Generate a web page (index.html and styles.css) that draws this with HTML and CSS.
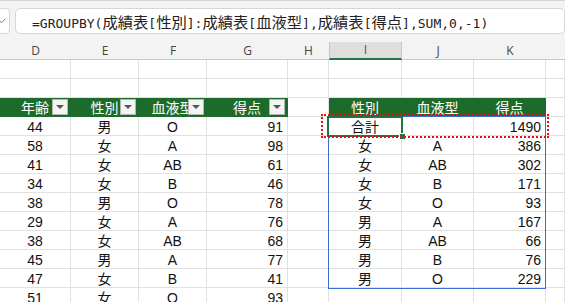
FILE: index.html
```html
<!DOCTYPE html>
<html lang="ja">
<head>
<meta charset="utf-8">
<link rel="stylesheet" href="styles.css">
</head>
<body>
<div class="app">
  <div class="fbar">
    <div class="namebox">
      <svg class="chev" width="9" height="6" viewBox="0 0 9 6"><path d="M0.5 0.8 L4.5 4.8 L8.5 0.8" fill="none" stroke="#777" stroke-width="1"/></svg>
    </div>
    <div class="fx"><span class="ftext">=GROUPBY(<span class="j">成績表</span>[<span class="j">性別</span>]:<span class="j">成績表</span>[<span class="j">血液型</span>],<span class="j">成績表</span>[<span class="j">得点</span>],SUM,0<span class="err">,-1</span>)</span></div>
  </div>
  <div class="colhead">
    <div class="ch">D</div>
    <div class="ch">E</div>
    <div class="ch">F</div>
    <div class="ch">G</div>
    <div class="ch">H</div>
    <div class="ch sel">I</div>
    <div class="ch">J</div>
    <div class="ch">K</div>
    <div class="ch last"></div>
  </div>
  <div class="sheet">
    <!-- row 1 -->
    <div class="cell"></div><div class="cell"></div><div class="cell"></div><div class="cell"></div><div class="cell"></div><div class="cell"></div><div class="cell"></div><div class="cell"></div><div class="cell"></div>
    <!-- row 2 -->
    <div class="cell"></div><div class="cell"></div><div class="cell"></div><div class="cell"></div><div class="cell"></div><div class="cell"></div><div class="cell"></div><div class="cell"></div><div class="cell"></div>
    <!-- row 3 headers -->
    <div class="cell hd">年齢<span class="dd"></span></div>
    <div class="cell hd">性別<span class="dd"></span></div>
    <div class="cell hd">血液型<span class="dd"></span></div>
    <div class="cell hd">得点<span class="dd"></span></div>
    <div class="cell"></div>
    <div class="cell hd">性別</div>
    <div class="cell hd">血液型</div>
    <div class="cell hd">得点</div>
    <div class="cell"></div>
    <!-- row 4 -->
    <div class="cell c">44</div><div class="cell c">男</div><div class="cell c">O</div><div class="cell r">91</div><div class="cell"></div>
    <div class="cell c">合計</div><div class="cell c"></div><div class="cell r">1490</div><div class="cell"></div>
    <!-- row 5 -->
    <div class="cell c">58</div><div class="cell c">女</div><div class="cell c">A</div><div class="cell r">98</div><div class="cell"></div>
    <div class="cell c">女</div><div class="cell c">A</div><div class="cell r">386</div><div class="cell"></div>
    <!-- row 6 -->
    <div class="cell c">41</div><div class="cell c">女</div><div class="cell c">AB</div><div class="cell r">61</div><div class="cell"></div>
    <div class="cell c">女</div><div class="cell c">AB</div><div class="cell r">302</div><div class="cell"></div>
    <!-- row 7 -->
    <div class="cell c">34</div><div class="cell c">女</div><div class="cell c">B</div><div class="cell r">46</div><div class="cell"></div>
    <div class="cell c">女</div><div class="cell c">B</div><div class="cell r">171</div><div class="cell"></div>
    <!-- row 8 -->
    <div class="cell c">38</div><div class="cell c">男</div><div class="cell c">O</div><div class="cell r">78</div><div class="cell"></div>
    <div class="cell c">女</div><div class="cell c">O</div><div class="cell r">93</div><div class="cell"></div>
    <!-- row 9 -->
    <div class="cell c">29</div><div class="cell c">女</div><div class="cell c">A</div><div class="cell r">76</div><div class="cell"></div>
    <div class="cell c">男</div><div class="cell c">A</div><div class="cell r">167</div><div class="cell"></div>
    <!-- row 10 -->
    <div class="cell c">38</div><div class="cell c">女</div><div class="cell c">AB</div><div class="cell r">68</div><div class="cell"></div>
    <div class="cell c">男</div><div class="cell c">AB</div><div class="cell r">66</div><div class="cell"></div>
    <!-- row 11 -->
    <div class="cell c">45</div><div class="cell c">男</div><div class="cell c">A</div><div class="cell r">77</div><div class="cell"></div>
    <div class="cell c">男</div><div class="cell c">B</div><div class="cell r">76</div><div class="cell"></div>
    <!-- row 12 -->
    <div class="cell c">47</div><div class="cell c">女</div><div class="cell c">B</div><div class="cell r">41</div><div class="cell"></div>
    <div class="cell c">男</div><div class="cell c">O</div><div class="cell r">229</div><div class="cell"></div>
    <!-- row 13 -->
    <div class="cell c">51</div><div class="cell c">女</div><div class="cell c">O</div><div class="cell r">93</div><div class="cell"></div>
    <div class="cell"></div><div class="cell"></div><div class="cell"></div><div class="cell"></div>

    <div class="spill"></div>
    <div class="active"><span class="handle"></span></div>
    <div class="mark"></div>
  </div>
</div>
</body>
</html>
```
FILE: styles.css
```css
html, body {
  margin: 0;
  padding: 0;
}
body {
  width: 565px;
  height: 302px;
  overflow: hidden;
  background: #ffffff;
  font-family: "Liberation Sans", "Noto Sans CJK JP", sans-serif;
}
.app {
  width: 565px;
  height: 302px;
  overflow: hidden;
}
.fbar {
  height: 42px;
  box-sizing: border-box;
  background: #f3f3f3;
  border-top: 1px solid #d4d4d4;
  padding-top: 7px;
  display: flex;
  gap: 5px;
  margin-left: -6px;
}
.namebox {
  width: 16px;
  height: 26px;
  box-sizing: border-box;
  background: #ffffff;
  border: 1px solid #d6d6d6;
  border-radius: 4px;
  display: flex;
  align-items: center;
  justify-content: flex-end;
  padding-right: 3px;
}
.chev {
  display: block;
}
.fx {
  flex: 1;
  height: 26px;
  box-sizing: border-box;
  background: #ffffff;
  border: 1px solid #d6d6d6;
  border-radius: 5px;
  padding-left: 16px;
  white-space: nowrap;
  overflow: hidden;
}
.ftext {
  font-family: "DejaVu Sans Mono", "Noto Sans CJK JP", monospace;
  font-size: 13px;
  line-height: 24px;
  color: #222222;
}
.ftext .j {
  font-family: "Noto Sans CJK JP", sans-serif;
  font-size: 15.3px;
}
.err {
  text-decoration: underline;
  text-decoration-color: #e02020;
  text-decoration-thickness: 2px;
  text-underline-offset: 5px;
}
.colhead {
  height: 18px;
  display: grid;
  grid-template-columns: 71px 68px 68px 81px 41px 73px 72px 72px 1fr;
  background: #f3f3f3;
}
.ch {
  box-sizing: border-box;
  border-bottom: 1px solid #c8c8c8;
  font-family: "Open Sans", "Liberation Sans", sans-serif;
  font-size: 12px;
  line-height: 17px;
  text-align: center;
  color: #444444;
}
.ch.sel {
  background: #dedede;
  color: #1f6b36;
  border-left: 1px solid #c4c4c4;
  border-right: 1px solid #c4c4c4;
  border-bottom: 2px solid #217346;
  line-height: 16px;
}
.sheet {
  position: relative;
  display: grid;
  grid-template-columns: 71px 68px 68px 81px 41px 73px 72px 72px 1fr;
  grid-auto-rows: 19px;
}
.cell {
  position: relative;
  box-sizing: border-box;
  border-right: 1px solid #e1e1e1;
  border-bottom: 1px solid #e1e1e1;
  font-size: 14px;
  line-height: 16px;
  padding-top: 2px;
  color: #111111;
  white-space: nowrap;
  overflow: hidden;
}
.c {
  text-align: center;
}
.r {
  text-align: right;
  padding-right: 4px;
}
.hd {
  background: #1d6b2b;
  border-color: #1d6b2b;
  color: #ffffff;
  text-align: center;
}
.dd {
  position: absolute;
  right: 2px;
  top: 1px;
  width: 16px;
  height: 16px;
  box-sizing: border-box;
  background: #f4f4f4;
  border: 1px solid #b4b4b4;
}
.dd::after {
  content: "";
  position: absolute;
  left: 3px;
  top: 5px;
  border-left: 4px solid transparent;
  border-right: 4px solid transparent;
  border-top: 4px solid #555555;
}
.spill {
  position: absolute;
  left: 328px;
  top: 56px;
  width: 218px;
  height: 173px;
  box-sizing: border-box;
  border: 1px solid #3a6fd2;
  pointer-events: none;
}
.active {
  position: absolute;
  left: 327px;
  top: 56px;
  width: 76px;
  height: 21px;
  box-sizing: border-box;
  border: 2px solid #217346;
}
.handle {
  position: absolute;
  right: -5px;
  bottom: -5px;
  width: 7px;
  height: 7px;
  box-sizing: border-box;
  background: #217346;
  border: 1px solid #ffffff;
}
.mark {
  position: absolute;
  left: 321px;
  top: 54px;
  width: 228px;
  height: 24px;
  box-sizing: border-box;
  border: 2px dotted #e81010;
}
```
